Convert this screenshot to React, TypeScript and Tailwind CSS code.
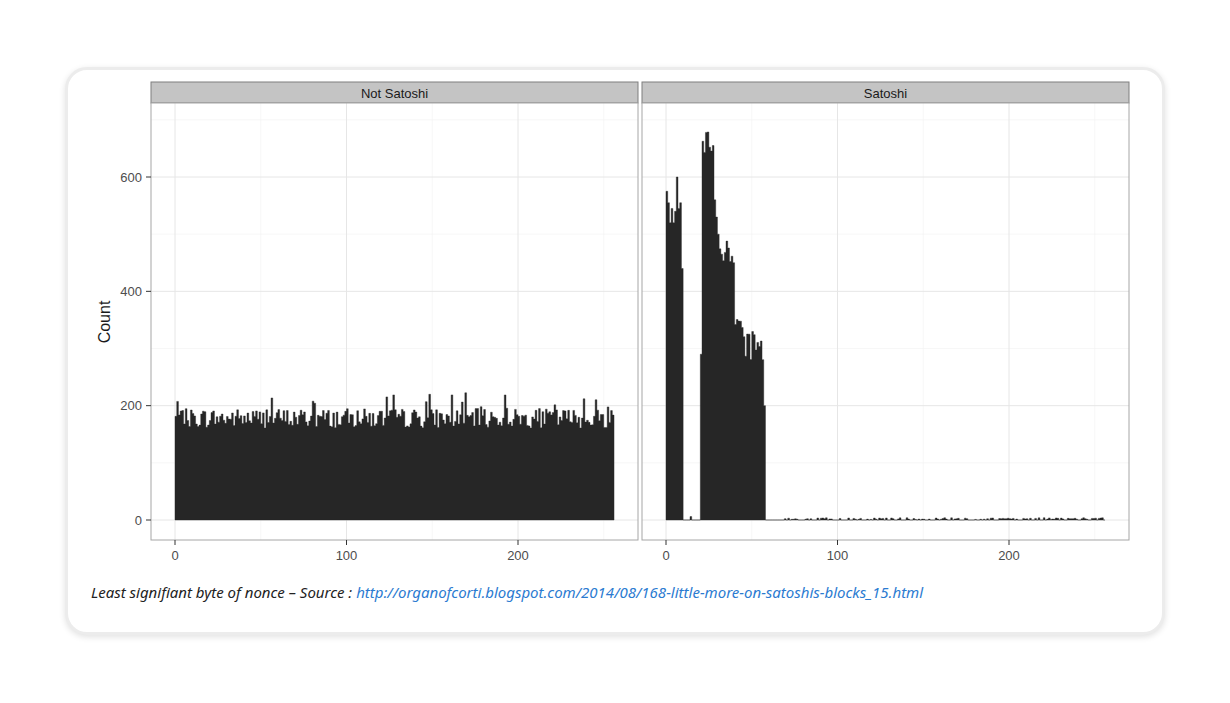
import React from "react";

function rng(seed: number) {
  let s = seed;
  return () => {
    s = (s * 1103515245 + 12345) % 2147483648;
    return s / 2147483648;
  };
}

const Y0 = 520;
const YS = 343 / 600;
const LX0 = 175;
const RX0 = 666;
const XS = 1.715;

const leftData: number[] = (() => {
  const r = rng(7);
  const a: number[] = [];
  for (let i = 0; i < 256; i++) a.push(178 + (r() - 0.5) * 34 + (r() > 0.93 ? 28 : 0));
  return a;
})();

const rightData: number[] = (() => {
  const r = rng(3);
  const a: number[] = [];
  const first = [575, 555, 520, 545, 520, 540, 600, 545, 555, 440];
  for (let i = 0; i < 256; i++) {
    if (i < 10) a.push(first[i]);
    else if (i < 20) a.push(i === 14 ? 6 : 0);
    else if (i < 58) {
      let v: number;
      if (i === 20) v = 290;
      else if (i < 28) v = 630 + r() * 60;
      else if (i < 31) v = 560 - (i - 28) * 30;
      else if (i < 40) v = 440 + r() * 50;
      else if (i < 45) v = 330 + r() * 30;
      else v = 280 + r() * 50;
      if (i === 57) v = 200;
      a.push(v);
    } else if (i < 65) a.push(0);
    else a.push(r() > 0.45 ? 1 + r() * 3 : 0);
  }
  return a;
})();

function Bars({ data, x0 }: { data: number[]; x0: number }) {
  let d = `M${x0} ${Y0}`;
  data.forEach((v, i) => {
    const y = Y0 - v * YS;
    d += ` L${(x0 + i * XS).toFixed(2)} ${y.toFixed(2)} L${(x0 + (i + 1) * XS).toFixed(2)} ${y.toFixed(2)}`;
  });
  d += ` L${(x0 + data.length * XS).toFixed(2)} ${Y0} Z`;
  return <path d={d} fill="#262626" stroke="#262626" strokeWidth={0.4} />;
}

const F = "Liberation Sans, Arial, sans-serif";

function Panel({ x, title, data }: { x: number; title: string; data: number[] }) {
  const w = 487;
  const x0 = x === 151 ? LX0 : RX0;
  const grid: React.ReactNode[] = [];
  [100, 300, 500, 700].forEach((v) => {
    const y = Y0 - v * YS;
    if (y > 103) grid.push(<line key={"m" + v} x1={x} x2={x + w} y1={y} y2={y} stroke="#f2f2f2" strokeWidth={0.6} />);
  });
  [-50, 50, 150, 250].forEach((v) => {
    const xx = x0 + v * XS;
    if (xx > x) grid.push(<line key={"mx" + v} x1={xx} x2={xx} y1={103} y2={540} stroke="#f2f2f2" strokeWidth={0.6} />);
  });
  [0, 200, 400, 600].forEach((v) => {
    const y = Y0 - v * YS;
    grid.push(<line key={"M" + v} x1={x} x2={x + w} y1={y} y2={y} stroke="#e6e6e6" strokeWidth={1} />);
  });
  [0, 100, 200].forEach((v) => {
    const xx = x0 + v * XS;
    grid.push(<line key={"Mx" + v} x1={xx} x2={xx} y1={103} y2={540} stroke="#e6e6e6" strokeWidth={1} />);
  });
  return (
    <g>
      <rect x={x} y={82} width={w} height={21} fill="#c4c4c4" stroke="#7f7f7f" strokeWidth={1} />
      <text x={x + w / 2} y={97.5} textAnchor="middle" fontSize={13} fill="#1a1a1a" fontFamily={F}>{title}</text>
      <rect x={x} y={103} width={w} height={437} fill="#fff" />
      {grid}
      <Bars data={data} x0={x0} />
      <rect x={x} y={103} width={w} height={437} fill="none" stroke="#a6a6a6" strokeWidth={1} />
      {[0, 100, 200].map((v) => {
        const xx = x0 + v * XS;
        return (
          <g key={v}>
            <line x1={xx} x2={xx} y1={540} y2={545} stroke="#333" strokeWidth={1} />
            <text x={xx} y={560} textAnchor="middle" fontSize={13} fill="#4d4d4d" fontFamily={F}>{v}</text>
          </g>
        );
      })}
    </g>
  );
}

export default function App() {
  return (
    <div className="w-[1230px] h-[703px] bg-white pt-[67px] pl-[65px]">
      <div className="w-[1100px] h-[568px] rounded-[22px] bg-white border-[3px] border-[#ececec] shadow-[0_2px_6px_rgba(0,0,0,0.12)] relative overflow-hidden">
        <svg width={1094} height={508} viewBox="68 70 1094 508" className="block">
          <Panel x={151} title="Not Satoshi" data={leftData} />
          <Panel x={642} title="Satoshi" data={rightData} />
          {[0, 200, 400, 600].map((v) => {
            const y = Y0 - v * YS;
            return (
              <g key={v}>
                <line x1={146} x2={151} y1={y} y2={y} stroke="#333" strokeWidth={1} />
                <text x={142} y={y + 4.5} textAnchor="end" fontSize={13} fill="#4d4d4d" fontFamily={F}>{v}</text>
              </g>
            );
          })}
          <text transform="translate(110 322) rotate(-90)" textAnchor="middle" fontSize={16} fill="#1a1a1a" fontFamily={F}>Count</text>
        </svg>
        <p className="ml-[23px] mt-[1px] w-[990px] text-[15px] leading-[26px] italic text-[#222] font-['DejaVu_Sans',sans-serif]">
          Least signifiant byte of nonce – Source : <span className="text-[#2b7bd1]">http://organofcorti.blogspot.com/2014/08/168-little-more-on-satoshis-blocks_15.html</span>
        </p>
      </div>
    </div>
  );
}
